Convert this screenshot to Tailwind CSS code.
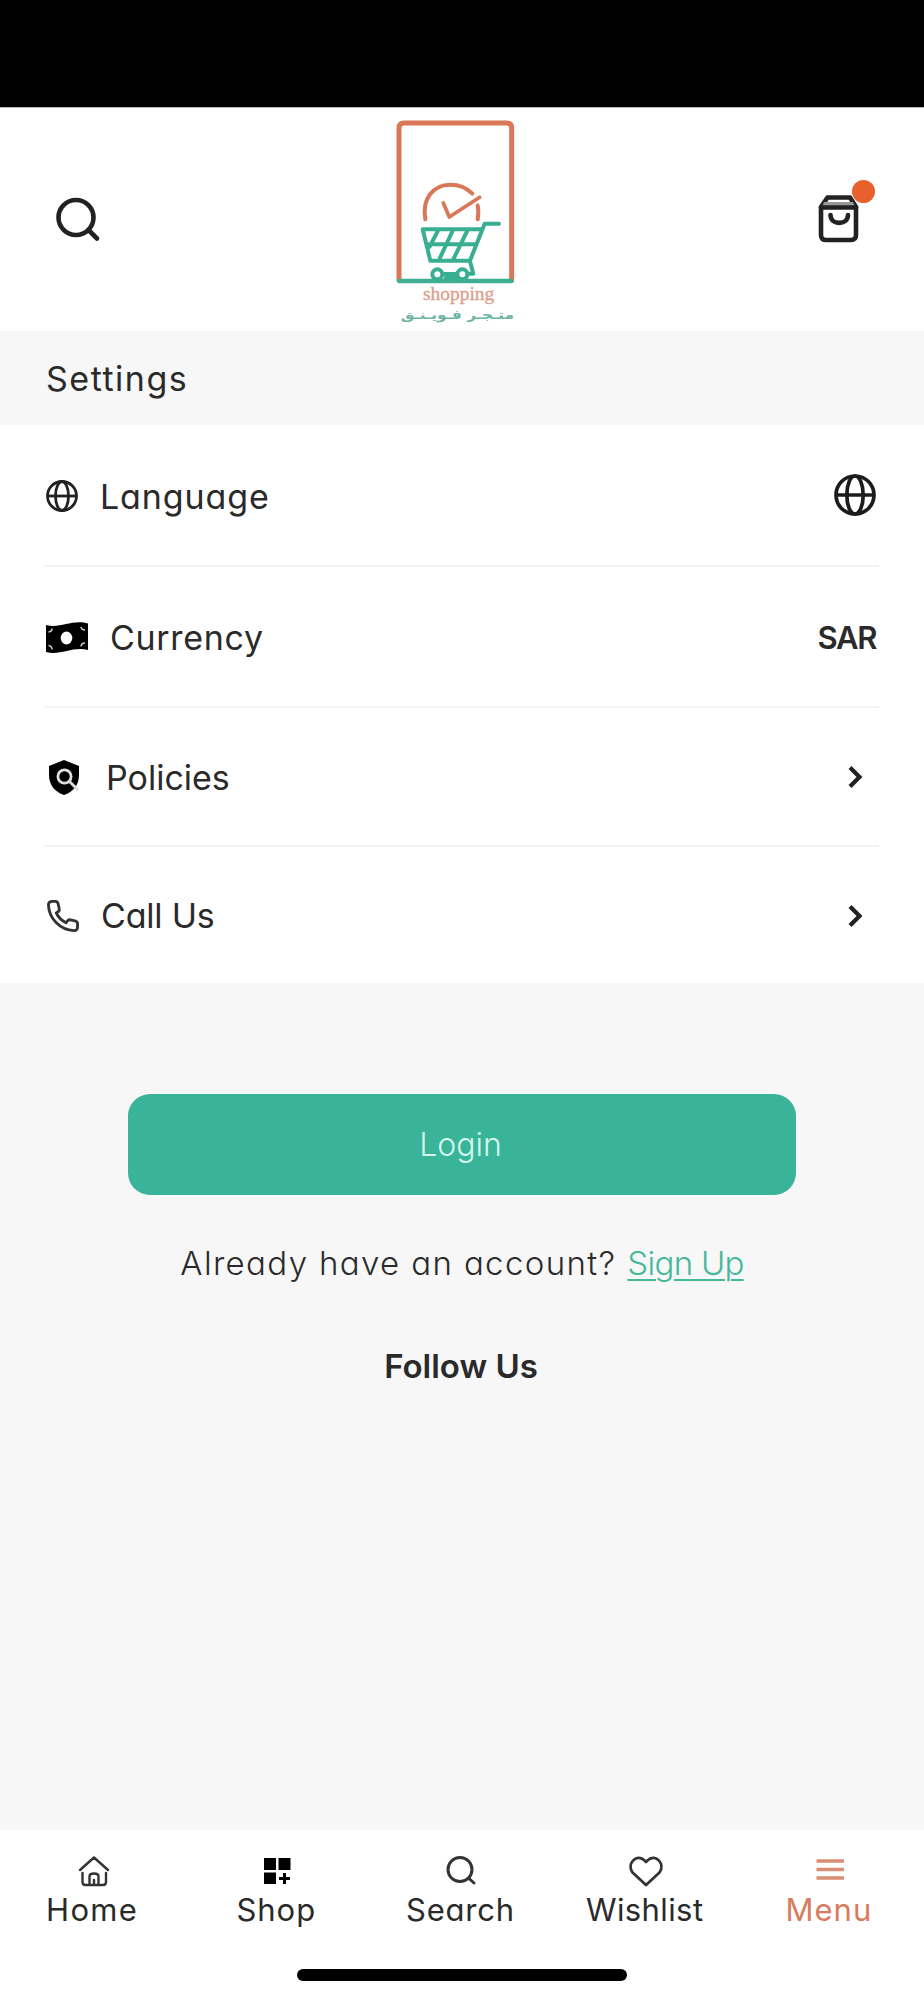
<!DOCTYPE html>
<html lang="en">
<head>
<meta charset="utf-8">
<title>Settings</title>
<script src="https://cdn.jsdelivr.net/npm/@tailwindcss/browser@4"></script>
</head>
<body class="w-[924px] h-[2000px] flex flex-col bg-[#f7f7f7] text-[#2a2a2a] text-[34px] leading-none whitespace-nowrap overflow-hidden font-['Inter','Noto_Sans',sans-serif] [font-feature-settings:'cv11']">
<div class="h-[107px] shrink-0 bg-black"></div>
<header class="h-[224px] shrink-0 bg-white border-t border-[#bbb] flex justify-between pl-[55px] pr-[47px]">
  <svg class="w-[46px] h-[46px] mt-[89px]" viewBox="0 0 46 46" fill="none" stroke="#222" stroke-width="4.6" stroke-linecap="round"><circle cx="21" cy="20.500" r="17.500"/><path d="M33.500 33L42 41.500"/></svg>
  <svg class="w-[160px] h-[224px] -mt-px" viewBox="0 21 480 672" fill="none" stroke-linecap="round" stroke-linejoin="round">
    <path d="M60 540V84Q60 69 75 69H383Q398 69 398 84V540" stroke="#d97757" stroke-width="15"/>
    <path d="M60 543H398" stroke="#3fae93" stroke-width="13"/>
    <path d="M139 358C128 300 160 254 214 254C242 254 264 264 280 281M296 316Q300 334 296 358" stroke="#d97757" stroke-width="12"/>
    <path d="M193 309L211 351L302 292" stroke="#d97757" stroke-width="11"/>
    <g stroke="#38ae92" stroke-width="12">
      <path d="M360 371H317L273 482H154L131 388H308M143 433H290M178 390L152 440M222 390L180 480M266 390L222 480"/>
      <path d="M273 484L283 521H266M192 522H232M200 534H230"/>
      <circle cx="175" cy="523" r="15"/><circle cx="250" cy="523" r="15"/>
    </g>
    <text x="132" y="600" textLength="214" lengthAdjust="spacingAndGlyphs" font-family="Liberation Serif, serif" font-size="56" fill="#dda08c" stroke="#dda08c">shopping</text>
    <text x="235" y="656" text-anchor="middle" textLength="340" lengthAdjust="spacingAndGlyphs" font-family="DejaVu Sans, sans-serif" font-size="36" font-weight="bold" fill="#6db3a2">متـجـر فـويـنـق</text>
  </svg>
  <svg class="w-[60px] h-[70px] mt-[71px]" viewBox="0 0 60 70" fill="none" stroke="#222" stroke-width="4.600" stroke-linecap="round" stroke-linejoin="round"><path d="M4 28L10.500 18.500H33L39 28V56Q39 61 34 61H9Q4 61 4 56Z" /><path d="M7 23H36L38 28H5Z" fill="#999" stroke="none"/><path d="M4 28.500H39"/><path d="M13.500 36C13.500 46.500 31 46.500 31 36"/><circle cx="46.500" cy="12.500" r="11.500" fill="#e8602c" stroke="none"/></svg>
</header>
<div class="h-[94px] shrink-0 flex items-center pt-[2px] pl-[46px]"><span class="tracking-[1.5px]">Settings</span></div>
<main class="shrink-0 bg-white px-[45px]">
  <div class="h-[142px] border-b-2 border-[#f3f3f3] flex items-center justify-between pr-[2px]">
    <div class="flex items-center"><svg class="w-[34px] h-[34px] mt-[2px]" viewBox="0 0 34 34" fill="none" stroke="#222" stroke-width="2.800"><circle cx="17" cy="17" r="14.500"/><ellipse cx="17" cy="17" rx="6.500" ry="14.500"/><path d="M2 17H32"/></svg><span class="ml-[21px] mt-[4px] tracking-[0.9px]">Language</span></div>
    <svg class="w-[44px] h-[44px]" viewBox="0 0 44 44" fill="none" stroke="#1c1c1c" stroke-width="3.700"><circle cx="22" cy="22" r="19"/><ellipse cx="22" cy="22" rx="8.200" ry="19"/><path d="M3 22H41"/></svg>
  </div>
  <div class="h-[141px] border-b-2 border-[#f3f3f3] flex items-center justify-between pr-[3px]">
    <div class="flex items-center"><svg class="w-[43px] h-[32px] mt-[2px]" viewBox="0 0 43 32"><path d="M1 3C15 7 27-3 43 1.500V28C28 24 15 34 1 30Z" fill="#000"/><ellipse cx="21.500" cy="16" rx="5.800" ry="6.500" fill="#fff"/><path d="M3.500 10Q7 9.500 7 6.500M36 5Q36.500 8 40 8M3.500 23.500Q7 24 7 27.500M36 24.500Q36.500 21 40 21" fill="none" stroke="#ccc" stroke-width="1.500"/></svg><span class="ml-[22px] mt-[3px] tracking-[0.7px]">Currency</span></div>
    <span class="font-semibold text-[31px] tracking-[-1.4px] mt-[2px]">SAR</span>
  </div>
  <div class="h-[139px] border-b-2 border-[#f3f3f3] flex items-center justify-between pr-[14px]">
    <div class="flex items-center"><svg class="w-[40px] h-[40px]" viewBox="0 0 40 40"><path d="M19 3L34 9V18C34 28 28 35 19 38C10 35 4 28 4 18V9Z" fill="#000"/><g fill="none" stroke="#ddd" stroke-width="2.800"><circle cx="19.500" cy="19.500" r="6.600"/><path d="M24 24L33 33"/></g></svg><span class="ml-[21px] mt-[2px]">Policies</span></div>
    <svg class="w-[18px] h-[26px]" viewBox="0 0 18 26" fill="none" stroke="#222" stroke-width="4.200"><path d="M3 3.500L12.500 13L3 22.500"/></svg>
  </div>
  <div class="h-[136px] flex items-center justify-between pr-[14px]">
    <div class="flex items-center"><svg class="w-[36px] h-[36px] mt-[2px]" viewBox="0 0 24 24" fill="none" stroke="#333" stroke-width="1.900" stroke-linejoin="round"><path d="M2.300 4.500C2.300 3 3.500 2.200 5 2.200H7C8 2.200 8.600 3 8.800 4L9.500 7.200C9.700 8 9.400 8.700 8.600 9.200L7.500 10C9 13 11 15 14 16.500L15 15.300C15.500 14.600 16.200 14.400 17 14.600L20 15.300C21 15.600 21.700 16.200 21.700 17.200V19.300C21.700 20.800 20.800 21.800 19.300 21.700C10 21.500 2.500 13.500 2.300 4.500Z"/></svg><span class="ml-[20px] mt-[2px] tracking-[-0.2px]">Call Us</span></div>
    <svg class="w-[18px] h-[26px] mt-px" viewBox="0 0 18 26" fill="none" stroke="#222" stroke-width="4.200"><path d="M3 3.500L12.500 13L3 22.500"/></svg>
  </div>
</main>
<section class="flex-1 flex flex-col items-center pt-[111px]">
  <button class="w-[668px] h-[101px] rounded-[22px] bg-[#39b498] text-[#d3f7ec] text-[32px] font-light flex items-center justify-center pr-[3px]">Login</button>
  <p class="mt-[52px] flex text-[33px] font-light"><span class="tracking-[1.36px]">Already have an account?</span><a class="ml-[11px] tracking-[-0.7px] text-[#45b89b] underline decoration-2 underline-offset-[4px]">Sign Up</a></p>
  <p class="mt-[70px] pr-[2px] text-[33px] font-semibold">Follow Us</p>
</section>
<nav class="h-[170px] shrink-0 bg-white flex flex-col items-center text-[31px]">
  <div class="w-[921px] mr-[3px] h-[139px] grid grid-cols-5 pt-[23px]">
    <div class="flex flex-col items-center gap-[3px]"><svg class="w-[36px] h-[38px] ml-[3px]" viewBox="0 0 36 38" fill="none" stroke="#333" stroke-width="2.400" stroke-linejoin="round" stroke-linecap="round"><path d="M4 17L18 4.500L32 17M6.500 20V29Q6.500 32 9.500 32H27Q30 32 30 29V20M13.500 32V23.500Q13.500 20.500 18 20.500Q22.500 20.500 22.500 23.500V32M18 27V32"/></svg><span class="tracking-[1.3px]">Home</span></div>
    <div class="flex flex-col items-center gap-[3px]"><svg class="w-[36px] h-[38px]" viewBox="0 0 36 38" fill="#000"><path d="M6 5H18V17H6ZM20.500 5H32.500V17H20.500ZM6 19.500H18V31H6ZM25 20H28V24H32V27H28V31H25V27H21V24H25Z"/></svg><span class="tracking-[1px]">Shop</span></div>
    <div class="flex flex-col items-center gap-[3px]"><svg class="w-[36px] h-[38px] ml-[2px]" viewBox="0 0 36 38" fill="none" stroke="#333" stroke-width="3" stroke-linecap="round"><circle cx="17" cy="16.500" r="12"/><path d="M25.500 25L31 30"/></svg><span class="tracking-[0.8px]">Search</span></div>
    <div class="flex flex-col items-center gap-[3px]"><svg class="w-[36px] h-[38px] ml-[2px]" viewBox="0 0 36 38" fill="none" stroke="#333" stroke-width="2.800" stroke-linejoin="round"><path d="M18 32L4.500 19.500C-1.500 11 8 .5 16 7L18 9L20 7C28 .5 37.500 11 31.500 19.500Z"/></svg><span class="tracking-[0.4px]">Wishlist</span></div>
    <div class="flex flex-col items-center gap-[3px] text-[#d97b5e]"><svg class="w-[36px] h-[38px]" viewBox="0 0 36 38" stroke="#d98e76" stroke-width="3.600"><path d="M5.500 8H33M5.500 16.500H33M5.500 25H33"/></svg><span class="tracking-[1px]">Menu</span></div>
  </div>
  <div class="w-[330px] h-[12px] rounded-full bg-black"></div>
</nav>
</body>
</html>
